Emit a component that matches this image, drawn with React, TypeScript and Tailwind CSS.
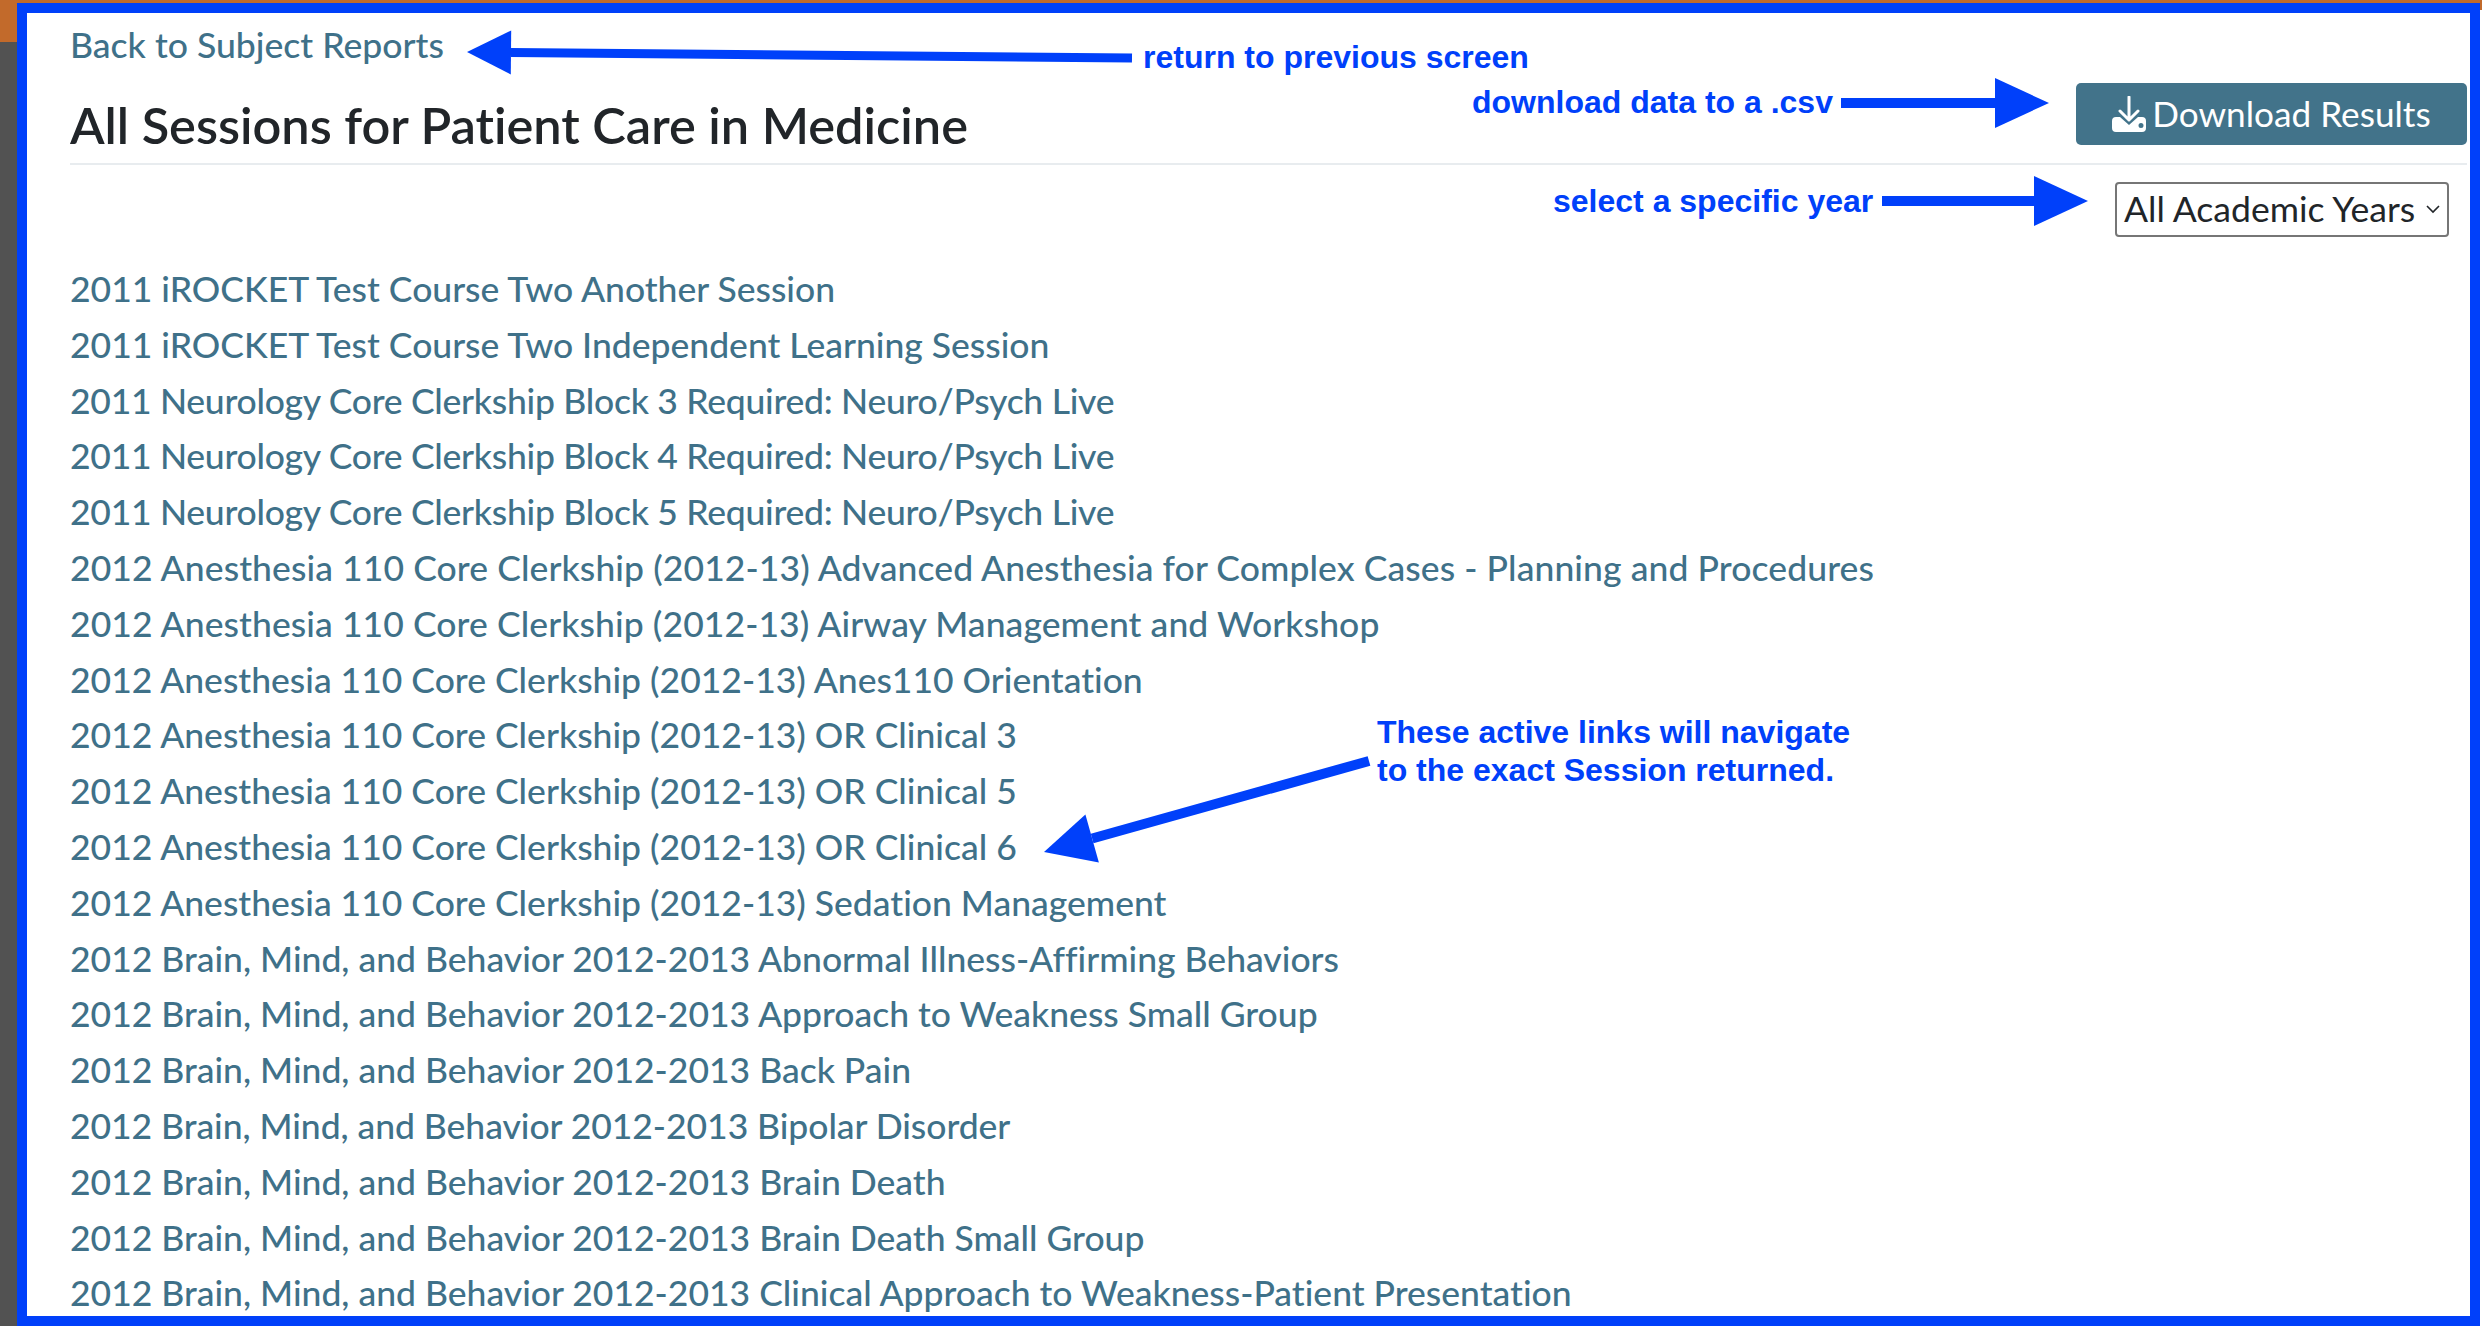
const links: { t: string; c?: string }[] = [
  { t: "2011 iROCKET Test Course Two Another Session" },
  { t: "2011 iROCKET Test Course Two Independent Learning Session" },
  { t: "2011 Neurology Core Clerkship Block 3 Required: Neuro/Psych Live", c: "tracking-[-0.27px]" },
  { t: "2011 Neurology Core Clerkship Block 4 Required: Neuro/Psych Live", c: "tracking-[-0.27px]" },
  { t: "2011 Neurology Core Clerkship Block 5 Required: Neuro/Psych Live", c: "tracking-[-0.27px]" },
  { t: "2012 Anesthesia 110 Core Clerkship (2012-13) Advanced Anesthesia for Complex Cases - Planning and Procedures", c: "tracking-[0.09px]" },
  { t: "2012 Anesthesia 110 Core Clerkship (2012-13) Airway Management and Workshop", c: "tracking-[0.08px]" },
  { t: "2012 Anesthesia 110 Core Clerkship (2012-13) Anes110 Orientation" },
  { t: "2012 Anesthesia 110 Core Clerkship (2012-13) OR Clinical 3" },
  { t: "2012 Anesthesia 110 Core Clerkship (2012-13) OR Clinical 5" },
  { t: "2012 Anesthesia 110 Core Clerkship (2012-13) OR Clinical 6" },
  { t: "2012 Anesthesia 110 Core Clerkship (2012-13) Sedation Management" },
  { t: "2012 Brain, Mind, and Behavior 2012-2013 Abnormal Illness-Affirming Behaviors" },
  { t: "2012 Brain, Mind, and Behavior 2012-2013 Approach to Weakness Small Group" },
  { t: "2012 Brain, Mind, and Behavior 2012-2013 Back Pain" },
  { t: "2012 Brain, Mind, and Behavior 2012-2013 Bipolar Disorder", c: "tracking-[-0.05px]" },
  { t: "2012 Brain, Mind, and Behavior 2012-2013 Brain Death" },
  { t: "2012 Brain, Mind, and Behavior 2012-2013 Brain Death Small Group" },
  { t: "2012 Brain, Mind, and Behavior 2012-2013 Clinical Approach to Weakness-Patient Presentation" },
];

function Arrow({ x1, y1, x2, y2, w = 9, head = 50, spread = 25 }: { x1: number; y1: number; x2: number; y2: number; w?: number; head?: number; spread?: number }) {
  const dx = x2 - x1;
  const dy = y2 - y1;
  const len = Math.hypot(dx, dy);
  const ux = dx / len;
  const uy = dy / len;
  const bx = x2 - ux * head;
  const by = y2 - uy * head;
  return (
    <g fill="#0040fa" stroke="none">
      <line x1={x1} y1={y1} x2={bx} y2={by} stroke="#0040fa" strokeWidth={w} />
      <polygon points={`${x2},${y2} ${bx - uy * spread},${by + ux * spread} ${bx + uy * spread},${by - ux * spread}`} />
    </g>
  );
}

const note = "absolute font-['Liberation_Sans',sans-serif] font-bold text-[#0040fa] text-[32px] leading-[38px] whitespace-nowrap";

export default function App() {
  return (
    <div className="relative flex h-[1326px] w-[2482px] overflow-hidden bg-[linear-gradient(#c26a2b_42px,#525252_42px)] pl-[17px] font-['Lato',sans-serif] [font-variant-ligatures:none]">
      <main className="mt-[3px] h-[1323px] w-[2463px] shrink-0 overflow-hidden border-[10px] border-[#0040fa] bg-white pl-[43px] pr-[3px]">
        <a className="mt-[12px] block text-[35.6px] font-medium leading-[40px] text-[#3f7189]">Back to Subject Reports</a>
        <header className="mt-[5px] flex h-[95px] items-end justify-between border-b-2 border-[#e8ecef] pb-[12px]">
          <h1 className="text-[50.5px] font-semibold leading-[52px] text-[#212529]">All Sessions for Patient Care in Medicine</h1>
          <button className="mb-[6px] flex h-[62px] w-[391px] items-center justify-center gap-[6px] rounded-[5px] bg-[#42738a] text-[35.2px] leading-[40px] text-white">
            <svg width="34" height="36" viewBox="0 0 34 36" fill="none">
              <path d="M17 1v23M8 15l9 9 9-9" stroke="white" strokeWidth="3" strokeLinecap="round" strokeLinejoin="round" />
              <path fillRule="evenodd" d="M4 21h4l9 8 9-8h4a4 4 0 0 1 4 4v7a4 4 0 0 1-4 4H4a4 4 0 0 1-4-4v-7a4 4 0 0 1 4-4zM29 27a2.5 2.5 0 1 0 0 5 2.5 2.5 0 0 0 0-5z" fill="white" />
            </svg>
            <span className="-translate-y-px">Download Results</span>
          </button>
        </header>
        <div className="mr-[18px] mt-[17px] flex justify-end">
          <div className="flex h-[55px] w-[334px] items-center justify-between rounded-[4px] border-2 border-[#767676] pb-[2px] pl-[7px] pr-[6px] text-[35.6px] text-[#212529]">
            <span>All Academic Years</span>
            <svg width="16" height="10" viewBox="0 0 16 10" fill="none">
              <path d="M2 2l6 6 6-6" stroke="#212529" strokeWidth="1.6" />
            </svg>
          </div>
        </div>
        <ul className="mt-[24px] flex flex-col">
          {links.map(({ t, c }) => (
            <li key={t} className={`h-[55.8px] whitespace-nowrap text-[35.5px] font-medium leading-[55.8px] text-[#3f7189] ${c ?? ""}`}>
              <a>{t}</a>
            </li>
          ))}
        </ul>
      </main>
      <div className="mt-[10px] w-[2px] bg-white" />

      <svg className="absolute left-0 top-0" width="2482" height="1326" fill="none">
        <Arrow x1={1132} y1={58} x2={467} y2={52} w={9} head={44} spread={22} />
        <Arrow x1={1841} y1={103} x2={2049} y2={103} w={10} head={54} spread={25} />
        <Arrow x1={1882} y1={201} x2={2088} y2={201} w={10} head={54} spread={25} />
        <Arrow x1={1369} y1={761} x2={1044} y2={852} w={10} head={50} spread={25} />
      </svg>

      <span className={`${note} left-[1143px] top-[38px]`}>return to previous screen</span>
      <span className={`${note} left-[1472px] top-[83px]`}>download data to a .csv</span>
      <span className={`${note} left-[1553px] top-[182px]`}>select a specific year</span>
      <span className={`${note} left-[1377px] top-[713px]`}>These active links will navigate<br />to the exact Session returned.</span>
    </div>
  );
}
